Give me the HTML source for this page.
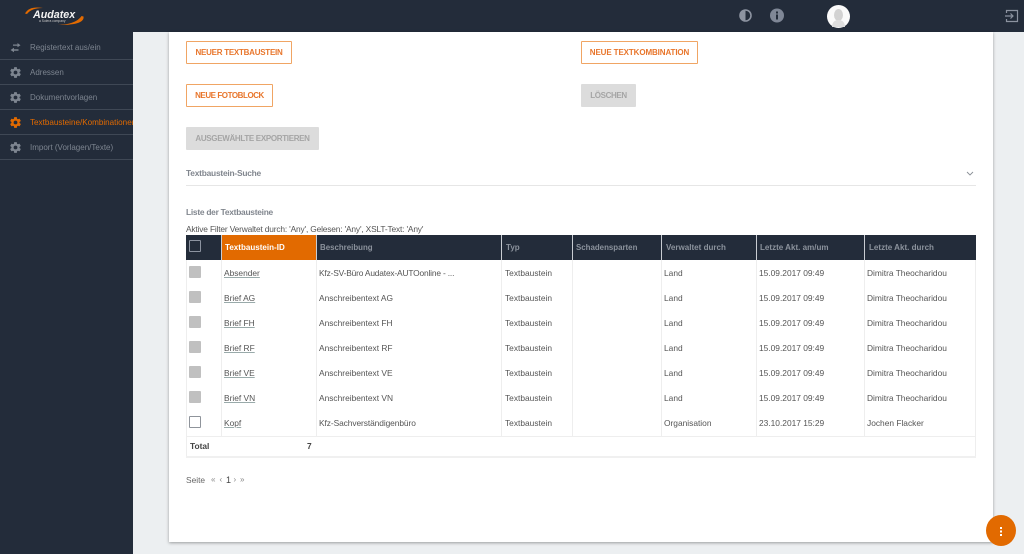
<!DOCTYPE html>
<html lang="de"><head><meta charset="utf-8"><title>Textbausteine</title>
<style>
*{box-sizing:border-box}
html,body{margin:0;padding:0;width:1024px;height:554px;overflow:hidden;background:#eceff1;font-family:"Liberation Sans",sans-serif}
#wrap{position:absolute;left:0;top:0;width:1024px;height:554px;filter:blur(.3px)}
.a{position:absolute;white-space:nowrap}
#top{left:0;top:0;width:1024px;height:32px;background:#232c3a}
#side{left:0;top:32px;width:133px;height:522px;background:#232c3a;overflow:hidden}
#card{left:169px;top:32px;width:824px;height:510px;background:#fff;box-shadow:0 1px 3px rgba(0,0,0,.35)}
.nav{position:absolute;left:0;width:133px;height:25px;border-bottom:1px solid #3f4855;color:#7d8590;font-size:8px;line-height:25px;padding-left:30px;white-space:nowrap}
.nav svg{position:absolute;left:8.5px;top:5.5px}
.btn{position:absolute;height:23px;font-size:8px;font-weight:bold;line-height:21px;text-align:center;white-space:nowrap;border-radius:1px}
.o{border:1px solid #f0a564;color:#e8762c;background:#fff}
.g{background:#dcdcdc;color:#a5a5a5;line-height:23px}
.th{position:absolute;top:235px;height:25px;background:#232c3a;color:#8b929c;font-size:8.05px;font-weight:bold;line-height:25px;white-space:nowrap}
.c{position:absolute;font-size:8.4px;line-height:12px;color:#555;white-space:nowrap}
.l{color:#555;text-decoration:underline;text-decoration-color:#9aa}
.v{position:absolute;top:260px;width:1px;height:176px;background:#eee}
.cb{position:absolute;left:189px;width:12px;height:12px;background:#c0c0c0;border-radius:1px}
.hl{position:absolute;top:235px;width:1px;height:25px;background:#c8ccd2}
</style></head><body>
<div id="wrap">
<div class="a" id="top"></div>
<div class="a" id="side">
<div class="nav" style="top:3px"><svg width="13" height="13" viewBox="0 0 13 13" fill="#7d8590" style="left:9px;top:6px"><path d="M4 3.500h4.500V2L11.500 4.200 8.500 6.200V4.800H4zM9.500 8.200H5V6.800L1.500 9 5 11.200V9.800h4.500z"/></svg>Registertext aus/ein</div>
<div class="nav" style="top:28px"><svg width="13" height="13" viewBox="0 0 24 24" fill="#7d8590"><path d="M19.400 13c.04-.32.06-.66.06-1s-.02-.68-.06-1l2.100-1.650c.19-.15.24-.42.12-.64l-2-3.460c-.12-.22-.39-.3-.61-.22l-2.490 1c-.52-.4-1.080-.73-1.690-.98l-.38-2.650A.49.490 0 0 0 14 2h-4c-.25 0-.46.18-.49.42l-.38 2.650c-.61.25-1.170.59-1.690.98l-2.490-1c-.23-.09-.49 0-.61.22l-2 3.460c-.13.22-.07.49.12.64L4.560 11c-.04.32-.07.66-.07 1s.03.68.07 1l-2.100 1.650c-.19.15-.25.42-.12.64l2 3.460c.12.22.38.3.61.22l2.490-1c.52.4 1.080.73 1.690.98l.38 2.650c.03.24.24.42.49.42h4c.25 0 .46-.18.49-.42l.38-2.650c.61-.25 1.170-.59 1.690-.98l2.490 1c.23.09.49 0 .61-.22l2-3.460c.12-.22.07-.49-.12-.64L19.400 13zM12 15.500a3.500 3.500 0 1 1 0-7 3.500 3.500 0 0 1 0 7z"/></svg>Adressen</div>
<div class="nav" style="top:53px"><svg width="13" height="13" viewBox="0 0 24 24" fill="#7d8590"><path d="M19.400 13c.04-.32.06-.66.06-1s-.02-.68-.06-1l2.100-1.650c.19-.15.24-.42.12-.64l-2-3.460c-.12-.22-.39-.3-.61-.22l-2.490 1c-.52-.4-1.080-.73-1.690-.98l-.38-2.650A.49.490 0 0 0 14 2h-4c-.25 0-.46.18-.49.42l-.38 2.650c-.61.25-1.170.59-1.690.98l-2.490-1c-.23-.09-.49 0-.61.22l-2 3.460c-.13.22-.07.49.12.64L4.560 11c-.04.32-.07.66-.07 1s.03.68.07 1l-2.100 1.650c-.19.15-.25.42-.12.64l2 3.460c.12.22.38.3.61.22l2.490-1c.52.4 1.080.73 1.690.98l.38 2.650c.03.24.24.42.49.42h4c.25 0 .46-.18.49-.42l.38-2.650c.61-.25 1.170-.59 1.690-.98l2.490 1c.23.09.49 0 .61-.22l2-3.460c.12-.22.07-.49-.12-.64L19.400 13zM12 15.500a3.500 3.500 0 1 1 0-7 3.500 3.500 0 0 1 0 7z"/></svg>Dokumentvorlagen</div>
<div class="nav" style="top:78px;color:#e26a00;font-size:8.1px"><svg width="13" height="13" viewBox="0 0 24 24" fill="#e26a00"><path d="M19.400 13c.04-.32.06-.66.06-1s-.02-.68-.06-1l2.100-1.650c.19-.15.24-.42.12-.64l-2-3.460c-.12-.22-.39-.3-.61-.22l-2.490 1c-.52-.4-1.080-.73-1.690-.98l-.38-2.650A.49.490 0 0 0 14 2h-4c-.25 0-.46.18-.49.42l-.38 2.650c-.61.25-1.170.59-1.690.98l-2.490-1c-.23-.09-.49 0-.61.22l-2 3.460c-.13.22-.07.49.12.64L4.560 11c-.04.32-.07.66-.07 1s.03.68.07 1l-2.100 1.650c-.19.15-.25.42-.12.64l2 3.460c.12.22.38.3.61.22l2.490-1c.52.4 1.080.73 1.690.98l.38 2.650c.03.24.24.42.49.42h4c.25 0 .46-.18.49-.42l.38-2.650c.61-.25 1.170-.59 1.690-.98l2.490 1c.23.09.49 0 .61-.22l2-3.460c.12-.22.07-.49-.12-.64L19.400 13zM12 15.500a3.500 3.500 0 1 1 0-7 3.500 3.500 0 0 1 0 7z"/></svg>Textbausteine/Kombinationen</div>
<div class="nav" style="top:103px"><svg width="13" height="13" viewBox="0 0 24 24" fill="#7d8590"><path d="M19.400 13c.04-.32.06-.66.06-1s-.02-.68-.06-1l2.100-1.650c.19-.15.24-.42.12-.64l-2-3.460c-.12-.22-.39-.3-.61-.22l-2.490 1c-.52-.4-1.080-.73-1.690-.98l-.38-2.650A.49.490 0 0 0 14 2h-4c-.25 0-.46.18-.49.42l-.38 2.650c-.61.25-1.170.59-1.690.98l-2.490-1c-.23-.09-.49 0-.61.22l-2 3.460c-.13.22-.07.49.12.64L4.560 11c-.04.32-.07.66-.07 1s.03.68.07 1l-2.100 1.650c-.19.15-.25.42-.12.64l2 3.460c.12.22.38.3.61.22l2.490-1c.52.4 1.080.73 1.690.98l.38 2.650c.03.24.24.42.49.42h4c.25 0 .46-.18.49-.42l.38-2.650c.61-.25 1.170-.59 1.690-.98l2.490 1c.23.09.49 0 .61-.22l2-3.460c.12-.22.07-.49-.12-.64L19.400 13zM12 15.500a3.500 3.500 0 1 1 0-7 3.500 3.500 0 0 1 0 7z"/></svg>Import (Vorlagen/Texte)</div>
</div>
<div class="a" id="card"></div>

<!-- logo -->
<svg class="a" style="left:22px;top:5px" width="64" height="22" viewBox="0 0 64 22"><path d="M3 8.500C6 3 12 1.500 21 3 13 3 8 5 5 9zM61.500 11.500c1 5.500-7 9-28 8.500 13 0 22-3 26-9z" fill="#e26a00"/></svg>
<div class="a" style="left:33px;top:8px;font-size:10.7px;font-weight:bold;font-style:italic;color:#f4f4f4;line-height:14px">Audatex</div>
<div class="a" style="left:39px;top:18.500px;font-size:3.300px;color:#c8c8c8;line-height:4px">a Solera company</div>

<!-- top icons -->
<svg class="a" style="left:739px;top:9px" width="13" height="13" viewBox="0 0 13 13"><circle cx="6.500" cy="6.500" r="5.500" fill="none" stroke="#8c93a0" stroke-width="1.600"/><path d="M6.500 1a5.500 5.500 0 0 0 0 11z" fill="#8c93a0"/></svg>
<svg class="a" style="left:770px;top:8px" width="14" height="15" viewBox="0 0 14 15"><circle cx="7" cy="7.500" r="7" fill="#7f8796"/><rect x="6" y="6.500" width="2" height="5" fill="#232c3a"/><rect x="6" y="3.500" width="2" height="2" fill="#232c3a"/></svg>
<svg class="a" style="left:827px;top:5px" width="23" height="23" viewBox="0 0 23 23"><circle cx="11.500" cy="11.500" r="11.500" fill="#fafafa"/><ellipse cx="11.500" cy="10" rx="4.500" ry="6" fill="#d2d2d2"/><path d="M5 22c0-5 3-7 6.500-7s6.500 2 6.500 7z" fill="#dedede"/></svg>
<svg class="a" style="left:1005px;top:9px" width="14" height="14" viewBox="0 0 14 14" fill="none" stroke="#8c93a0" stroke-width="1.200"><path d="M1.500 4V1.500h11v11h-11V10M0 7h8M5.500 4.500L8 7l-2.500 2.500"/></svg>

<!-- buttons -->
<div class="btn o" style="left:186px;top:41px;width:106px;letter-spacing:-.25px">NEUER TEXTBAUSTEIN</div>
<div class="btn o" style="left:581px;top:41px;width:117px;letter-spacing:-.11px">NEUE TEXTKOMBINATION</div>
<div class="btn o" style="left:186px;top:84px;width:87px;letter-spacing:-.44px">NEUE FOTOBLOCK</div>
<div class="btn g" style="left:581px;top:84px;width:55px;letter-spacing:-.36px">LÖSCHEN</div>
<div class="btn g" style="left:186px;top:127px;width:133px;letter-spacing:-.32px">AUSGEWÄHLTE EXPORTIEREN</div>

<!-- search -->
<div class="a" style="left:186px;top:167px;font-size:8.4px;letter-spacing:-.22px;font-weight:bold;color:#81868e;line-height:12px">Textbaustein-Suche</div>
<svg class="a" style="left:966px;top:171px" width="8" height="6" viewBox="0 0 8 6" fill="none" stroke="#8a8f96" stroke-width=".9"><path d="M1 1l3 3 3-3"/></svg>
<div class="a" style="left:186px;top:185px;width:790px;height:1px;background:#e6e6e6"></div>

<div class="a" style="left:186px;top:206px;font-size:8.4px;letter-spacing:-.26px;font-weight:bold;color:#81868e;line-height:12px">Liste der Textbausteine</div>
<div class="a" style="left:186px;top:223px;font-size:8.4px;letter-spacing:-.17px;color:#555;line-height:12px">Aktive Filter Verwaltet durch: 'Any', Gelesen: 'Any', XSLT-Text: 'Any'</div>

<!-- table header -->
<div class="th" style="left:186px;width:790px"></div>
<div class="th" style="left:222px;width:94px;background:#e26a00;color:#fff;padding-left:3px">Textbaustein-ID</div>
<div class="th" style="left:317px;padding-left:3px;font-size:7.9px">Beschreibung</div>
<div class="th" style="left:502px;padding-left:4px">Typ</div>
<div class="th" style="left:572px;padding-left:4px;font-size:7.9px">Schadensparten</div>
<div class="th" style="left:662px;padding-left:4px">Verwaltet durch</div>
<div class="th" style="left:756px;padding-left:4px">Letzte Akt. am/um</div>
<div class="th" style="left:865px;padding-left:4px">Letzte Akt. durch</div>
<div class="a" style="left:189px;top:240px;width:12px;height:12px;border:1.200px solid #8c93a0;border-radius:1px"></div>
<div class="hl" style="left:221px"></div>
<div class="hl" style="left:316px"></div>
<div class="hl" style="left:501px"></div>
<div class="hl" style="left:572px"></div>
<div class="hl" style="left:661px"></div>
<div class="hl" style="left:756px"></div>
<div class="hl" style="left:864px"></div>

<!-- grid lines -->
<div class="v" style="left:186px;height:198px"></div>
<div class="v" style="left:221px"></div>
<div class="v" style="left:316px"></div>
<div class="v" style="left:501px"></div>
<div class="v" style="left:572px"></div>
<div class="v" style="left:661px"></div>
<div class="v" style="left:756px"></div>
<div class="v" style="left:864px"></div>
<div class="v" style="left:975px;height:198px"></div>
<div class="a" style="left:186px;top:436px;width:790px;height:1px;background:#eee"></div>
<div class="a" style="left:186px;top:456px;width:790px;height:2px;background:#f0f0f0"></div>

<!-- rows -->
<div class="cb" style="top:266px"></div><div class="c l" style="left:224px;top:267px">Absender</div><div class="c" style="left:319px;top:267px;letter-spacing:-.17px">Kfz-SV-Büro Audatex-AUTOonline - ...</div><div class="c" style="left:505px;top:267px">Textbaustein</div><div class="c" style="left:664px;top:267px">Land</div><div class="c" style="left:759px;top:267px">15.09.2017 09:49</div><div class="c" style="left:867px;top:267px">Dimitra Theocharidou</div>
<div class="cb" style="top:291px"></div><div class="c l" style="left:224px;top:292px">Brief AG</div><div class="c" style="left:319px;top:292px">Anschreibentext AG</div><div class="c" style="left:505px;top:292px">Textbaustein</div><div class="c" style="left:664px;top:292px">Land</div><div class="c" style="left:759px;top:292px">15.09.2017 09:49</div><div class="c" style="left:867px;top:292px">Dimitra Theocharidou</div>
<div class="cb" style="top:316px"></div><div class="c l" style="left:224px;top:317px">Brief FH</div><div class="c" style="left:319px;top:317px">Anschreibentext FH</div><div class="c" style="left:505px;top:317px">Textbaustein</div><div class="c" style="left:664px;top:317px">Land</div><div class="c" style="left:759px;top:317px">15.09.2017 09:49</div><div class="c" style="left:867px;top:317px">Dimitra Theocharidou</div>
<div class="cb" style="top:341px"></div><div class="c l" style="left:224px;top:342px">Brief RF</div><div class="c" style="left:319px;top:342px">Anschreibentext RF</div><div class="c" style="left:505px;top:342px">Textbaustein</div><div class="c" style="left:664px;top:342px">Land</div><div class="c" style="left:759px;top:342px">15.09.2017 09:49</div><div class="c" style="left:867px;top:342px">Dimitra Theocharidou</div>
<div class="cb" style="top:366px"></div><div class="c l" style="left:224px;top:367px">Brief VE</div><div class="c" style="left:319px;top:367px">Anschreibentext VE</div><div class="c" style="left:505px;top:367px">Textbaustein</div><div class="c" style="left:664px;top:367px">Land</div><div class="c" style="left:759px;top:367px">15.09.2017 09:49</div><div class="c" style="left:867px;top:367px">Dimitra Theocharidou</div>
<div class="cb" style="top:391px"></div><div class="c l" style="left:224px;top:392px">Brief VN</div><div class="c" style="left:319px;top:392px">Anschreibentext VN</div><div class="c" style="left:505px;top:392px">Textbaustein</div><div class="c" style="left:664px;top:392px">Land</div><div class="c" style="left:759px;top:392px">15.09.2017 09:49</div><div class="c" style="left:867px;top:392px">Dimitra Theocharidou</div>
<div class="cb" style="top:416px;background:#fff;border:1.200px solid #8f949b"></div><div class="c l" style="left:224px;top:417px">Kopf</div><div class="c" style="left:319px;top:417px;letter-spacing:-.08px">Kfz-Sachverständigenbüro</div><div class="c" style="left:505px;top:417px">Textbaustein</div><div class="c" style="left:664px;top:417px">Organisation</div><div class="c" style="left:759px;top:417px">23.10.2017 15:29</div><div class="c" style="left:867px;top:417px">Jochen Flacker</div>

<div class="c" style="left:190px;top:440px;font-weight:bold;color:#444">Total</div>
<div class="c" style="left:307px;top:440px;font-weight:bold;color:#444">7</div>

<div class="c" style="left:186px;top:474px;color:#666">Seite</div>
<div class="c" style="left:211px;top:474px;color:#888;font-size:8px">«</div>
<div class="c" style="left:219.5px;top:474px;color:#888;font-size:8px">‹</div>
<div class="c" style="left:226px;top:474px;color:#444;font-size:9px">1</div>
<div class="c" style="left:233.5px;top:474px;color:#888;font-size:8px">›</div>
<div class="c" style="left:240px;top:474px;color:#888;font-size:8px">»</div>

<!-- fab -->
<div class="a" style="left:986px;top:515px;width:30px;height:31px;border-radius:50%;background:#e26a00"></div>
<div class="a" style="left:1000px;top:527px;width:2px;height:2px;background:#fff;box-shadow:0 3.500px 0 #fff,0 7px 0 #fff"></div>
</div>
</body></html>
